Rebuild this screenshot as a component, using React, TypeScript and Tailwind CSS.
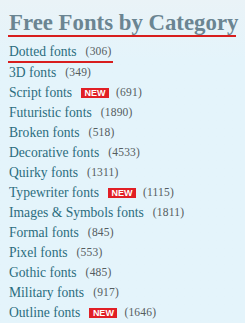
const categories: [string, number, boolean?][] = [
  ['Dotted fonts', 306],
  ['3D fonts', 349],
  ['Script fonts', 691, true],
  ['Futuristic fonts', 1890],
  ['Broken fonts', 518],
  ['Decorative fonts', 4533],
  ['Quirky fonts', 1311],
  ['Typewriter fonts', 1115, true],
  ['Images & Symbols fonts', 1811],
  ['Formal fonts', 845],
  ['Pixel fonts', 553],
  ['Gothic fonts', 485],
  ['Military fonts', 917],
  ['Outline fonts', 1646, true],
];

export default function App() {
  return (
    <div className="w-[245px] h-[323px] overflow-hidden bg-gradient-to-b from-[#eaf3f7] to-[#e4f4fb] to-[60px] font-['Liberation_Serif',serif]">
      <div className="pl-2 pr-2 pt-[11px]">
        <h2 className="text-[22.8px] leading-[24px] font-bold text-[#6b8592] pl-[1px] border-b-2 border-[#d81e1e] w-[228px] whitespace-nowrap">
          Free Fonts by Category
        </h2>
        <ul className="mt-[6px]">
          {categories.map(([name, count, isNew], i) => (
            <li key={name} className="h-[20px] flex items-center">
              <span className={`flex items-center pl-[1px] ${i === 0 ? 'border-b-2 border-[#d81e1e] pr-[1px]' : ''}`}>
                <a href="#" className="text-[13.6px] leading-[18px] text-[#2b6d7e]">{name}</a>
                {isNew && (
                  <span className="ml-[9px] bg-[#e11f25] text-white text-[9px] font-bold leading-[10px] px-[3.5px] font-['Liberation_Sans',sans-serif]">
                    NEW
                  </span>
                )}
                <span className={`${isNew ? 'ml-[7px]' : 'ml-[9px]'} text-[11.5px] text-[#555c60] tracking-[0.2px]`}>({count})</span>
              </span>
            </li>
          ))}
        </ul>
      </div>
    </div>
  );
}
